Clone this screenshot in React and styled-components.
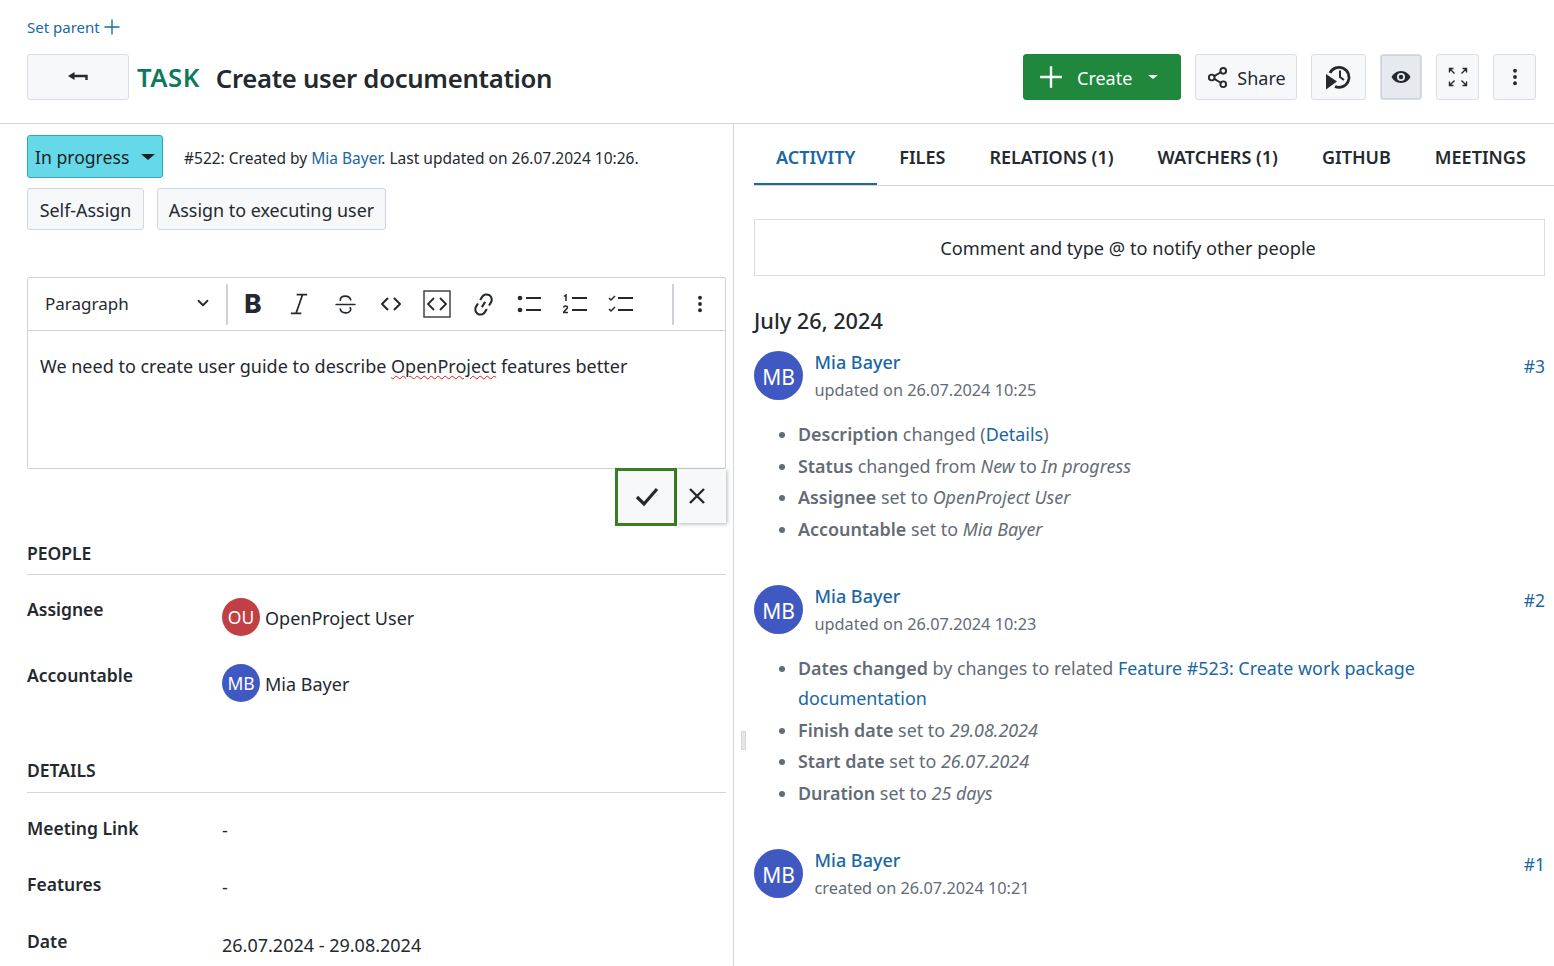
import React from 'react';
import styled, { createGlobalStyle } from 'styled-components';

const Global = createGlobalStyle`
  html, body { margin: 0; padding: 0; background: #fff; }
  body {
    font-family: "Noto Sans", "Open Sans", "Liberation Sans", sans-serif;
    color: #24292f;
    height: 966px;
    overflow: hidden;
  }
  * { box-sizing: border-box; }
`;

const Svg = ({ size = 20, children, ...rest }) => (
  <svg width={size} height={size} viewBox="0 0 24 24" fill="none" stroke="currentColor"
    strokeWidth="2" strokeLinecap="round" strokeLinejoin="round" {...rest}>
    {children}
  </svg>
);

const DotsIcon = ({ size = 20 }) => (
  <Svg size={size} stroke="none" fill="currentColor">
    <circle cx="12" cy="4.5" r="2.3" />
    <circle cx="12" cy="12" r="2.3" />
    <circle cx="12" cy="19.5" r="2.3" />
  </Svg>
);

export default function App() {
  return (
    <Page>
      <Global />
      <Top>
        <ParentLink>
          Set parent
          <Svg size={18} strokeWidth="1.8" strokeLinecap="butt"><path d="M12 2v20M2 12h20" /></Svg>
        </ParentLink>
        <HeaderRow>
          <BackButton aria-label="Back">
            <svg width="20" height="10" viewBox="0 0 20 10">
              <path d="M0 4l6.500-4v8z" fill="#24292f" />
              <path d="M6 4h12.500v4" fill="none" stroke="#24292f" strokeWidth="2.400" />
            </svg>
          </BackButton>
          <TypeLabel>TASK</TypeLabel>
          <PageTitle>Create user documentation</PageTitle>
          <Actions>
            <CreateButton>
              <Svg size={26} strokeWidth="2.200" strokeLinecap="butt"><path d="M12 2v20M2 12h20" /></Svg>
              <ButtonLabel>Create</ButtonLabel>
              <Caret $color="#fff" $size={5} />
            </CreateButton>
            <ToolButton $w={102}>
              <Svg size={23} strokeWidth="2">
                <circle cx="18" cy="5" r="3" />
                <circle cx="6" cy="12" r="3" />
                <circle cx="18" cy="19" r="3" />
                <path d="M8.6 13.5l6.8 4M15.4 6.5l-6.8 4" />
              </Svg>
              <ButtonLabel>Share</ButtonLabel>
            </ToolButton>
            <ToolButton $w={55} aria-label="Activity">
              <svg width="28" height="26" viewBox="0 0 28 26" fill="none" stroke="#24292f" strokeWidth="2.800">
                <path d="M5 9a10 10 0 1 1 5 13.500" />
                <path d="M15 6.500v6.500l4 3" strokeWidth="2" />
                <path d="M1 10l11 7.500-11 8z" fill="#24292f" stroke="none" />
              </svg>
            </ToolButton>
            <ToolButton $w={42} $active aria-label="Details">
              <svg width="20" height="14" viewBox="0 0 20 14">
                <path d="M10 1C5.500 1 2 4 .5 7 2 10 5.500 13 10 13s8-3 9.500-6C18 4 14.500 1 10 1z" fill="#24292f" />
                <circle cx="10" cy="7" r="4" fill="#e6e9ed" />
                <circle cx="10" cy="7" r="2.200" fill="#24292f" />
              </svg>
            </ToolButton>
            <ToolButton $w={43} aria-label="Fullscreen">
              <svg width="20" height="20" viewBox="0 0 20 20" fill="none" stroke="#24292f" strokeWidth="1.400">
                <path d="M1.500 5.500v-4h4M1.500 1.500l5 5M18.500 5.500v-4h-4M18.500 1.500l-5 5M1.500 14.500v4h4M1.500 18.500l5-5M18.500 14.500v4h-4M18.500 18.500l-5-5" />
              </svg>
            </ToolButton>
            <ToolButton $w={43} aria-label="More"><DotsIcon size={20} /></ToolButton>
          </Actions>
        </HeaderRow>
      </Top>

      <Split>
        <LeftPane>
          <StatusRow>
            <StatusButton>
              In progress
              <Caret $color="#1b1f24" $size={7} />
            </StatusButton>
            <Meta>#522: Created by <Link>Mia Bayer</Link>. Last updated on 26.07.2024 10:26.</Meta>
          </StatusRow>
          <AssignRow>
            <AssignButton $w={117}>Self-Assign</AssignButton>
            <AssignButton $w={229}>Assign to executing user</AssignButton>
          </AssignRow>

          <Editor>
            <Toolbar>
              <StyleSelect>
                Paragraph
                <Svg size={18} strokeWidth="2.400"><path d="M6 9l6 6 6-6" /></Svg>
              </StyleSelect>
              <ToolSep $after={2} />
              <ToolSlot><Bold>B</Bold></ToolSlot>
              <ToolSlot>
                <Svg size={28} strokeWidth="1.500" strokeLinecap="butt">
                  <path d="M10 4h9M5 20h9M15 4L9.500 20" />
                </Svg>
              </ToolSlot>
              <ToolSlot>
                <Svg size={25} strokeWidth="1.600">
                  <path d="M3 12h18" />
                  <path d="M17 7.500c-.8-2.200-2.800-3.500-5-3.500-3 0-5 1.500-5 4M16.500 15c.5 1 .5 1 .5 1.500 0 2-2.200 3.500-5 3.500-2.500 0-4.500-1.200-5-3.500" />
                </Svg>
              </ToolSlot>
              <ToolSlot>
                <Svg size={24} strokeWidth="2" strokeLinecap="butt"><path d="M9 6l-6 6 6 6M15 6l6 6-6 6" /></Svg>
              </ToolSlot>
              <ToolSlot>
                <svg width="28" height="28" viewBox="0 0 28 28" fill="none" stroke="#24292f">
                  <rect x="1" y="1" width="26" height="26" strokeWidth="1.500" stroke="#444" />
                  <path d="M11 8l-6 6 6 6M17 8l6 6-6 6" strokeWidth="1.800" />
                </svg>
              </ToolSlot>
              <ToolSlot>
                <Svg size={25} strokeWidth="2" strokeLinecap="butt">
                  <g transform="rotate(-58 12 12)">
                    <path d="M10 7H6.500a5 5 0 0 0 0 10H10" />
                    <path d="M14 7h3.500a5 5 0 0 1 0 10H14" />
                    <path d="M9 12h6" />
                  </g>
                </Svg>
              </ToolSlot>
              <ToolSlot>
                <svg width="24" height="18" viewBox="0 0 24 18" fill="#24292f">
                  <circle cx="3" cy="3" r="2.300" /><circle cx="3" cy="15" r="2.300" />
                  <rect x="9" y="2" width="15" height="2" /><rect x="9" y="14" width="15" height="2" />
                </svg>
              </ToolSlot>
              <ToolSlot>
                <svg width="24" height="20" viewBox="0 0 24 20" fill="none" stroke="#24292f">
                  <path d="M1 2.500L3 1v6" strokeWidth="1.500" />
                  <path d="M.5 13.500c.5-2 4-2 4 0 0 1.500-3 2.500-4 5h4.500" strokeWidth="1.500" />
                  <path d="M9 4h15M9 16h15" strokeWidth="2" />
                </svg>
              </ToolSlot>
              <ToolSlot>
                <svg width="26" height="18" viewBox="0 0 26 18" fill="none" stroke="#24292f">
                  <path d="M1 3l2 2 4-4M1 14l2 2 4-4" strokeWidth="1.500" />
                  <path d="M10 3h15M10 15h15" strokeWidth="2" />
                </svg>
              </ToolSlot>
              <Spacer />
              <ToolSep />
              <ToolSlot $w={51}><DotsIcon size={20} /></ToolSlot>
            </Toolbar>
            <EditorBody>
              We need to create user guide to describe <Misspelled>OpenProject</Misspelled> features better
            </EditorBody>
            <SaveBar>
              <SaveButton aria-label="Save">
                <svg width="24" height="20" viewBox="0 0 24 20" fill="none" stroke="#24292f" strokeWidth="3.200">
                  <path d="M2 10l7 7L22 2" />
                </svg>
              </SaveButton>
              <CancelButton aria-label="Cancel">
                <svg width="18" height="18" viewBox="0 0 18 18" fill="none" stroke="#24292f" strokeWidth="2.400">
                  <path d="M2 2l14 14M16 2L2 16" />
                </svg>
              </CancelButton>
            </SaveBar>
          </Editor>

          <SectionTitle $top={73} $h={33}>PEOPLE</SectionTitle>
          <Attr $h={66}>
            <AttrLabel $raise={1}>Assignee</AttrLabel>
            <AttrValue>
              <Avatar $bg="#c14044">OU</Avatar>
              OpenProject User
            </AttrValue>
          </Attr>
          <Attr $h={66}>
            <AttrLabel $raise={1}>Accountable</AttrLabel>
            <AttrValue>
              <Avatar $bg="#4059c2">MB</Avatar>
              Mia Bayer
            </AttrValue>
          </Attr>

          <SectionTitle $top={52} $h={34}>DETAILS</SectionTitle>
          <Attr $h={56}>
            <AttrLabel>Meeting Link</AttrLabel>
            <PlainValue>-</PlainValue>
          </Attr>
          <Attr $h={57}>
            <AttrLabel>Features</AttrLabel>
            <PlainValue $shift={1}>-</PlainValue>
          </Attr>
          <Attr $h={57}>
            <AttrLabel>Date</AttrLabel>
            <PlainValue $shift={2}>26.07.2024 - 29.08.2024</PlainValue>
          </Attr>
        </LeftPane>

        <Handle />

        <RightPane>
          <Tabs>
            <Tab $active>ACTIVITY</Tab>
            <Tab>FILES</Tab>
            <Tab>RELATIONS (1)</Tab>
            <Tab>WATCHERS (1)</Tab>
            <Tab>GITHUB</Tab>
            <Tab>MEETINGS</Tab>
          </Tabs>
          <Feed>
            <CommentBox>Comment and type @ to notify other people</CommentBox>
            <DayTitle>July 26, 2024</DayTitle>

            <Entry>
              <EntryHead>
                <BigAvatar>MB</BigAvatar>
                <Who>
                  <Author>Mia Bayer</Author>
                  <When>updated on 26.07.2024 10:25</When>
                </Who>
                <EntryNo>#3</EntryNo>
              </EntryHead>
              <Changes>
                <li><b>Description</b> changed (<Link>Details</Link>)</li>
                <li><b>Status</b> changed from <i>New</i> to <i>In progress</i></li>
                <li><b>Assignee</b> set to <i>OpenProject User</i></li>
                <li><b>Accountable</b> set to <i>Mia Bayer</i></li>
              </Changes>
            </Entry>

            <Entry>
              <EntryHead>
                <BigAvatar>MB</BigAvatar>
                <Who>
                  <Author>Mia Bayer</Author>
                  <When>updated on 26.07.2024 10:23</When>
                </Who>
                <EntryNo>#2</EntryNo>
              </EntryHead>
              <Changes>
                <li><b>Dates changed</b> by changes to related <Link>Feature #523: Create work package documentation</Link></li>
                <li><b>Finish date</b> set to <i>29.08.2024</i></li>
                <li><b>Start date</b> set to <i>26.07.2024</i></li>
                <li><b>Duration</b> set to <i>25 days</i></li>
              </Changes>
            </Entry>

            <Entry>
              <EntryHead>
                <BigAvatar>MB</BigAvatar>
                <Who>
                  <Author>Mia Bayer</Author>
                  <When>created on 26.07.2024 10:21</When>
                </Who>
                <EntryNo>#1</EntryNo>
              </EntryHead>
            </Entry>
          </Feed>
        </RightPane>
      </Split>
    </Page>
  );
}

const Page = styled.div`
  width: 1554px;
  height: 966px;
  overflow: hidden;
`;
const Top = styled.header`
  height: 124px;
  padding: 16px 18px 0 27px;
  border-bottom: 1px solid #d0d7de;
`;
const ParentLink = styled.div`
  display: flex;
  align-items: center;
  gap: 3px;
  height: 22px;
  font-size: 15px;
  line-height: 20px;
  color: #1a67a3;
`;
const HeaderRow = styled.div`
  display: flex;
  align-items: center;
  height: 46px;
  margin-top: 16px;
`;
const ButtonBase = styled.button`
  display: inline-flex;
  align-items: center;
  justify-content: center;
  font-family: inherit;
  color: #24292f;
  background: #f6f8fa;
  border: 1px solid #d8dee4;
  border-radius: 3px;
  padding: 0;
`;
const BackButton = styled(ButtonBase)`
  width: 102px;
  height: 46px;
  margin-right: 8px;
`;
const TypeLabel = styled.span`
  padding-top: 1px;
  font-size: 25.700px;
  font-weight: 600;
  letter-spacing: 0.5px;
  color: #0b7a5c;
  margin-right: 16px;
`;
const PageTitle = styled.h1`
  margin: 0;
  padding-top: 2px;
  font-size: 25.700px;
  font-weight: 600;
  letter-spacing: -0.3px;
`;
const Actions = styled.div`
  display: flex;
  gap: 14px;
  margin-left: auto;
`;
const ButtonLabel = styled.span`
  margin-top: 2px;
`;
const CreateButton = styled(ButtonBase)`
  width: 158px;
  height: 46px;
  justify-content: flex-start;
  gap: 13px;
  padding-left: 14px;
  font-size: 18px;
  color: #fff;
  background: #1f883d;
  border-color: #1f883d;
`;
const ToolButton = styled(ButtonBase)`
  width: ${p => p.$w}px;
  height: 46px;
  gap: 8px;
  font-size: 18px;
  background: ${p => (p.$active ? '#e6e9ed' : '#f6f8fa')};
  box-shadow: ${p => (p.$active ? 'inset 0 0 0 1px #cfd4da' : 'none')};
`;
const Caret = styled.i`
  display: inline-block;
  width: 0;
  height: 0;
  margin-left: ${p => (p.$size > 5 ? 12 : 3)}px;
  border-left: ${p => p.$size}px solid transparent;
  border-right: ${p => p.$size}px solid transparent;
  border-top: ${p => p.$size - 1}px solid ${p => p.$color};
`;
const Split = styled.div`
  position: relative;
  display: flex;
  height: 842px;
`;
const LeftPane = styled.section`
  width: 734px;
  padding: 11px 7px 0 27px;
  border-right: 1px solid #d0d7de;
`;
const StatusRow = styled.div`
  display: flex;
  align-items: center;
  gap: 21px;
`;
const StatusButton = styled(ButtonBase)`
  width: 136px;
  height: 43px;
  justify-content: flex-start;
  padding-left: 7px;
  font-size: 17.600px;
  color: #1b1f24;
  background: #66d9e8;
  border-color: #2ea8b8;
`;
const Meta = styled.span`
  padding-top: 2px;
  font-size: 15.500px;
`;
const Link = styled.span`
  color: #1a67a3;
`;
const AssignRow = styled.div`
  display: flex;
  gap: 13px;
  margin-top: 10px;
`;
const AssignButton = styled(ButtonBase)`
  width: ${p => p.$w}px;
  height: 42px;
  padding-top: 2px;
  font-size: 17.900px;
  border-color: #d0d7de;
`;
const Editor = styled.div`
  position: relative;
  height: 192px;
  margin-top: 47px;
  border: 1px solid #cfd2d6;
  border-radius: 2px;
`;
const Toolbar = styled.div`
  display: flex;
  align-items: center;
  height: 53px;
  border-bottom: 1px solid #cfd2d6;
`;
const StyleSelect = styled.div`
  display: flex;
  align-items: center;
  justify-content: space-between;
  width: 198px;
  padding: 0 14px 2px 17px;
  font-size: 17px;
`;
const ToolSep = styled.div`
  width: 2px;
  height: 41px;
  margin-right: ${p => p.$after || 0}px;
  background: #cfd2d6;
`;
const ToolSlot = styled.div`
  display: flex;
  align-items: center;
  justify-content: center;
  flex: none;
  width: ${p => p.$w || 46}px;
  color: #24292f;
`;
const Bold = styled.span`
  font-family: Inter, "Noto Sans", sans-serif;
  font-size: 26px;
  font-weight: 800;
  line-height: 1;
`;
const Spacer = styled.div`
  flex: 1;
`;
const EditorBody = styled.div`
  padding: 21px 12px 0;
  font-size: 18px;
  line-height: 28px;
`;
const Misspelled = styled.span`
  text-decoration: underline wavy #e02020 1px;
  text-underline-offset: 2px;
`;
const SaveBar = styled.div`
  position: absolute;
  right: -1px;
  top: 190px;
  display: flex;
  height: 58px;
`;
const SaveButton = styled(ButtonBase)`
  width: 62px;
  height: 58px;
  padding-left: 1px;
  background: #f6f8fa;
  border: 3px solid #3a7d22;
  border-radius: 0;
`;
const CancelButton = styled(ButtonBase)`
  width: 49px;
  height: 54px;
  margin-top: 1px;
  padding-right: 10px;
  border: 0;
  border-radius: 0;
  box-shadow: 1px 1px 4px rgba(0, 0, 0, 0.3);
`;
const SectionTitle = styled.h3`
  margin: ${p => p.$top}px 0 0;
  height: ${p => p.$h}px;
  font-size: 17.500px;
  font-weight: 600;
  line-height: 22px;
  border-bottom: 1px solid #d0d7de;
`;
const Attr = styled.div`
  display: grid;
  grid-template-columns: 195px 1fr;
  height: ${p => p.$h}px;
  padding-top: 23px;
`;
const AttrLabel = styled.div`
  margin-top: ${p => -(p.$raise || 0)}px;
  font-size: 17.500px;
  font-weight: 600;
  line-height: 24px;
`;
const AttrValue = styled.div`
  display: flex;
  align-items: flex-start;
  gap: 5px;
  font-size: 18px;
  line-height: 40px;
`;
const PlainValue = styled.div`
  padding-top: ${p => p.$shift || 0}px;
  font-size: 18px;
  line-height: 28px;
`;
const Avatar = styled.span`
  display: flex;
  align-items: center;
  justify-content: center;
  width: 38px;
  height: 38px;
  border-radius: 50%;
  font-size: 17.500px;
  color: #fff;
  background: ${p => p.$bg};
`;
const Handle = styled.div`
  position: absolute;
  left: 741px;
  top: 607px;
  width: 5px;
  height: 19px;
  background: #e6e6e6;
  border: 1px solid #d8d8d8;
`;
const RightPane = styled.section`
  flex: 1;
  padding-left: 20px;
`;
const Tabs = styled.nav`
  display: flex;
  height: 62px;
  border-bottom: 1px solid #d0d7de;
`;
const Tab = styled.div`
  display: flex;
  align-items: center;
  height: 61px;
  padding: 6px 22px 0;
  font-size: 18px;
  font-weight: 600;
  color: ${p => (p.$active ? '#1a67a3' : '#24292f')};
  border-bottom: 2px solid ${p => (p.$active ? '#1a67a3' : 'transparent')};
`;
const Feed = styled.div`
  padding: 33px 9px 0 0;
`;
const CommentBox = styled.div`
  display: flex;
  align-items: center;
  justify-content: center;
  height: 57px;
  padding-right: 43px;
  font-size: 18.200px;
  border: 1px solid #d8dee4;
`;
const DayTitle = styled.h2`
  margin: 30px 0 0;
  font-size: 21.700px;
  font-weight: 500;
  line-height: 30px;
`;
const Entry = styled.article`
  margin-top: 15px;
  margin-bottom: 41.500px;
`;
const EntryHead = styled.div`
  display: flex;
  align-items: flex-start;
`;
const BigAvatar = styled.span`
  display: flex;
  align-items: center;
  justify-content: center;
  flex: none;
  width: 49px;
  height: 49px;
  padding-top: 2px;
  border-radius: 50%;
  font-size: 21px;
  color: #fff;
  background: #4059c2;
`;
const Who = styled.div`
  margin-left: 11.500px;
`;
const Author = styled.div`
  margin-top: -1px;
  font-size: 18px;
  font-weight: 500;
  line-height: 24px;
  color: #1a67a3;
`;
const When = styled.div`
  margin-top: 4px;
  font-size: 16.300px;
  line-height: 24px;
  color: #636c76;
`;
const EntryNo = styled.div`
  margin-left: auto;
  margin-top: 3px;
  font-size: 17.500px;
  color: #1a67a3;
`;
const Changes = styled.ul`
  margin: 17px 0 0;
  padding: 0 100px 0 44px;
  font-size: 17.900px;
  line-height: 30px;
  color: #636c76;
  li { margin-bottom: 1.500px; }
  b { font-weight: 600; }
`;
